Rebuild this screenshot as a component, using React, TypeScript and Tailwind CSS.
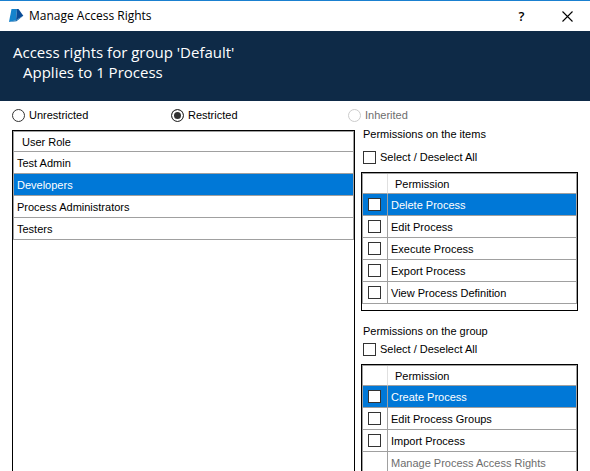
import { useId, useState } from "react";

type Permission = { name: string; disabled?: boolean };

const roles = ["Test Admin", "Developers", "Process Administrators", "Testers"];

const itemPermissions: Permission[] = [
  { name: "Delete Process" },
  { name: "Edit Process" },
  { name: "Execute Process" },
  { name: "Export Process" },
  { name: "View Process Definition" },
];

const groupPermissions: Permission[] = [
  { name: "Create Process" },
  { name: "Edit Process Groups" },
  { name: "Import Process" },
  { name: "Manage Process Access Rights", disabled: true },
];

const checkboxClass =
  "block size-[13px] shrink-0 appearance-none border border-[#333333] bg-white checked:bg-[#333333] checked:shadow-[inset_0_0_0_2px_#ffffff]";

function AppIcon() {
  return (
    <svg width="16" height="16" viewBox="0 0 16 16" aria-hidden="true">
      <path d="M3.500 1H9L8 12.300 1 14Z" fill="#1583cc" />
      <path d="M9 1h1.500L15.300 7.700 8 12.300Z" fill="#0a4c97" />
      <path d="M8 12.300 15.300 7.700 8.500 13.200 1 14Z" fill="#0d66ae" />
    </svg>
  );
}

function TitleBar() {
  return (
    <header className="flex h-[31px] shrink-0 items-center border-t border-[#1a80d0] pl-2">
      <AppIcon />
      <h1 className="ml-[5px] flex-1 font-['Open_Sans','Noto_Sans',sans-serif] text-[12px] leading-4">
        Manage Access Rights
      </h1>
      <button
        type="button"
        aria-label="Help"
        className="flex h-full w-[45px] items-center justify-center font-['Open_Sans','Noto_Sans',sans-serif] text-[13px] font-semibold"
      >
        ?
      </button>
      <button type="button" aria-label="Close" className="flex h-full w-[46px] items-center justify-center">
        <svg width="11" height="11" viewBox="0 0 11 11" aria-hidden="true">
          <path d="m.5.5 10 10m0-10-10 10" stroke="#000" strokeWidth="1.1" fill="none" />
        </svg>
      </button>
    </header>
  );
}

function AccessMode() {
  const [mode, setMode] = useState("Restricted");
  return (
    <div role="radiogroup" aria-label="Access mode" className="grid grid-cols-[159px_177px_1fr] pl-3 pt-[7px]">
      {["Unrestricted", "Restricted", "Inherited"].map((name) => (
        <label key={name} className="flex h-[14px] items-center gap-1 has-disabled:text-[#6d6d6d]">
          <input
            type="radio"
            name="mode"
            checked={mode === name}
            disabled={name === "Inherited"}
            onChange={() => setMode(name)}
            className="size-[13px] shrink-0 appearance-none rounded-full border border-[#333333] bg-white checked:bg-[#333333] checked:shadow-[inset_0_0_0_2px_#ffffff] disabled:border-[#cccccc]"
          />
          {name}
        </label>
      ))}
    </div>
  );
}

function RoleTable() {
  const [selected, setSelected] = useState("Developers");
  return (
    <div className="mt-[3px] border border-b-0 border-black">
      <table className="w-full border-separate border-spacing-0 border-l border-t border-[#a0a0a0]">
        <thead>
          <tr>
            <th className="h-5 border-b border-r border-[#a0a0a0] pl-2 text-left font-normal">User Role</th>
          </tr>
        </thead>
        <tbody>
          {roles.map((role) => (
            <tr
              key={role}
              aria-selected={role === selected}
              onClick={() => setSelected(role)}
              className="aria-selected:bg-[#0078d7] aria-selected:text-white"
            >
              <td className="h-[22px] border-b border-r border-[#a0a0a0] pl-[3px]">{role}</td>
            </tr>
          ))}
        </tbody>
      </table>
    </div>
  );
}

function PermissionTable({ permissions, padded }: { permissions: Permission[]; padded?: boolean }) {
  const id = useId();
  const [selected, setSelected] = useState(permissions[0].name);
  return (
    <div className={padded ? "border border-black pb-[6px]" : "border border-black"}>
      <table className="w-full table-fixed border-separate border-spacing-0 border-l border-t border-[#a0a0a0]">
        <colgroup>
          <col className="w-[25px]" />
          <col />
        </colgroup>
        <thead>
          <tr>
            <td className="h-5 border-b border-r border-b-[#a0a0a0] border-r-[#e0e0e0]" />
            <th className="h-5 border-b border-r border-[#a0a0a0] pl-[7px] text-left font-normal">Permission</th>
          </tr>
        </thead>
        <tbody>
          {permissions.map(({ name, disabled }) => (
            <tr
              key={name}
              aria-selected={name === selected}
              onClick={() => setSelected(name)}
              className={
                disabled ? "text-[#6d6d6d]" : "aria-selected:bg-[#0078d7] aria-selected:text-white"
              }
            >
              <td className="h-[22px] border-b border-r border-[#a0a0a0] pl-[5px]">
                {!disabled && <input id={`${id}-${name}`} type="checkbox" className={checkboxClass} />}
              </td>
              <td className="h-[22px] border-b border-r border-[#a0a0a0] pl-[3px]">
                {disabled ? name : <label htmlFor={`${id}-${name}`}>{name}</label>}
              </td>
            </tr>
          ))}
        </tbody>
      </table>
    </div>
  );
}

function SelectAll() {
  return (
    <label className="flex items-center gap-1 pl-[2px]">
      <input type="checkbox" className={checkboxClass} />
      Select / Deselect All
    </label>
  );
}

export default function App() {
  return (
    <div className="flex h-screen flex-col overflow-hidden bg-white font-['Liberation_Sans',Arial,sans-serif] text-[11px] leading-[14px] text-black">
      <TitleBar />
      <div className="shrink-0 bg-[#0e2a47] px-[13px] pb-[19px] pt-[11px] font-['Open_Sans','Noto_Sans',sans-serif] text-[15px] leading-5 text-white">
        <h2>Access rights for group 'Default'</h2>
        <p className="pl-[10px]">Applies to 1 Process</p>
      </div>
      <AccessMode />
      <main className="grid flex-1 grid-cols-[minmax(0,343fr)_minmax(0,217fr)] gap-x-[6px] px-3 pt-[5px]">
        <div className="grid">
          <RoleTable />
        </div>
        <div>
          <section>
            <h3 className="pl-[2px]">Permissions on the items</h3>
            <div className="pb-2 pt-[9px]">
              <SelectAll />
            </div>
            <PermissionTable permissions={itemPermissions} padded />
          </section>
          <section className="mt-[13px]">
            <h3 className="pl-[2px]">Permissions on the group</h3>
            <div className="pb-2 pt-1">
              <SelectAll />
            </div>
            <PermissionTable permissions={groupPermissions} />
          </section>
        </div>
      </main>
    </div>
  );
}
